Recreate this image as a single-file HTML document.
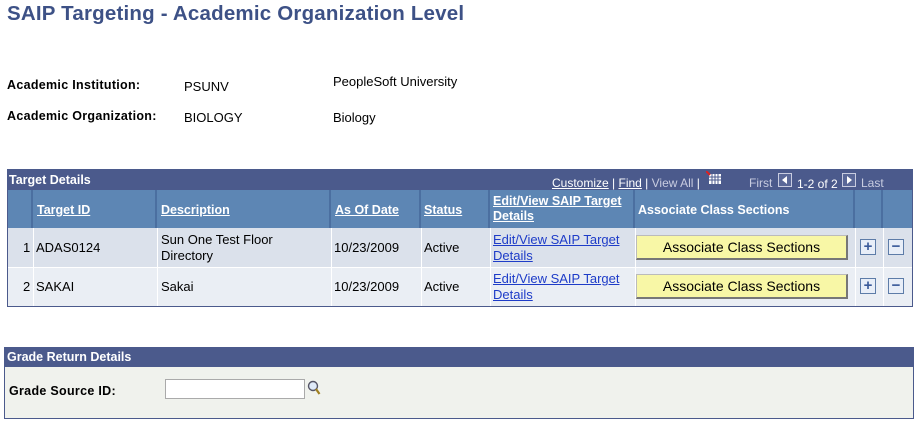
<!DOCTYPE html>
<html><head><meta charset="utf-8"><style>
*{margin:0;padding:0;box-sizing:border-box}
body{width:919px;height:426px;background:#fff;font-family:"Liberation Sans",Arial,sans-serif;font-size:13px;color:#000;position:relative;overflow:hidden}
.a{position:absolute;white-space:nowrap}
h1{position:absolute;left:7px;top:2px;font-size:20.5px;font-weight:bold;color:#3d5186;letter-spacing:0.2px}
.lbl{font-weight:bold;font-size:12.5px;letter-spacing:0.3px}
.hdr{background:#4b5a8c;color:#fff;font-weight:bold}
.ch{background:#5d86b4;border-right:2px solid #4b6fa0;position:absolute;top:190px;height:38px;color:#fff;font-weight:bold;font-size:12.5px}
.ch a{color:#fff;text-decoration:underline}
a{color:#1e3cc8;text-decoration:underline}
.btn{position:absolute;left:636px;width:212px;height:25px;background:#f8f7a6;border:1px solid #bbb;border-right:2px solid #777;border-bottom:2px solid #777;text-align:center;line-height:22px;font-size:14px}
.pm{position:absolute;width:16px;height:16px;border:1px solid #5d7ca8;background:#e8eef8;color:#3a5a9a;font-weight:bold;font-size:15px;line-height:13px;text-align:center}
</style></head><body>
<h1>SAIP Targeting - Academic Organization Level</h1>
<div class="a lbl" style="left:7px;top:78px">Academic Institution:</div>
<div class="a" style="left:184px;top:79px">PSUNV</div>
<div class="a" style="left:333px;top:74px">PeopleSoft University</div>
<div class="a lbl" style="left:7px;top:109px">Academic Organization:</div>
<div class="a" style="left:184px;top:110px">BIOLOGY</div>
<div class="a" style="left:333px;top:110px">Biology</div>

<div class="a" style="left:7px;top:169px;width:906px;height:138px;border:1px solid #4b5a8c;background:#fff"></div>
<div class="a hdr" style="left:7px;top:169px;width:906px;height:21px;padding:4px 2px;font-size:12.5px">Target Details</div>
<div class="a" style="left:552px;top:176px;color:#fff;font-size:12px"><span style="text-decoration:underline">Customize</span> | <span style="text-decoration:underline">Find</span> | <span style="color:#c8cce0">View All</span> |</div>
<svg class="a" style="left:706px;top:171px" width="16" height="14"><rect x="3" y="3" width="12" height="10" fill="#fff"/><path d="M3 6H15M3 9H15M6 3V13M9 3V13M12 3V13" stroke="#4b5a8c"/><path d="M0 0L4 4" stroke="#e02020" stroke-width="2"/></svg>
<div class="a" style="left:749px;top:176px;color:#c8cce0;font-size:12px">First</div>
<div class="a" style="left:778px;top:173px;width:14px;height:14px;border:1px solid #c8cce0;background:#5a6898"><svg width="12" height="12"><path d="M8 2L3 6L8 10Z" fill="#fff"/></svg></div>
<div class="a" style="left:797px;top:177px;color:#fff;font-size:12px">1-2 of 2</div>
<div class="a" style="left:842px;top:173px;width:14px;height:14px;border:1px solid #c8cce0;background:#5a6898"><svg width="12" height="12"><path d="M4 2L9 6L4 10Z" fill="#fff"/></svg></div>
<div class="a" style="left:861px;top:176px;color:#c8cce0;font-size:12px">Last</div>

<div class="ch" style="left:8px;width:25px"></div>
<div class="ch" style="left:33px;width:124px;padding:13px 4px"><a>Target ID</a></div>
<div class="ch" style="left:157px;width:174px;padding:13px 4px"><a>Description</a></div>
<div class="ch" style="left:331px;width:90px;padding:13px 4px"><a>As Of Date</a></div>
<div class="ch" style="left:421px;width:69px;padding:13px 3px"><a>Status</a></div>
<div class="ch" style="left:490px;width:145px;padding:4px 3px;line-height:15px;white-space:normal"><a>Edit/View SAIP Target Details</a></div>
<div class="ch" style="left:635px;width:220px;padding:13px 3px">Associate Class Sections</div>
<div class="ch" style="left:855px;width:28px"></div>
<div class="ch" style="left:883px;width:29px;border-right:none"></div>

<div class="a" style="left:8px;top:228px;width:904px;height:39px;background:#dbe1eb"></div>
<div class="a" style="left:8px;top:267px;width:904px;height:39px;background:#eaeef4"></div>
<div class="a" style="left:8px;top:267px;width:904px;height:1px;background:#fff"></div>
<div class="a" style="left:33px;top:228px;width:1px;height:78px;background:#fff"></div>
<div class="a" style="left:157px;top:228px;width:1px;height:78px;background:#fff"></div>
<div class="a" style="left:331px;top:228px;width:1px;height:78px;background:#fff"></div>
<div class="a" style="left:421px;top:228px;width:1px;height:78px;background:#fff"></div>
<div class="a" style="left:490px;top:228px;width:1px;height:78px;background:#fff"></div>
<div class="a" style="left:635px;top:228px;width:1px;height:78px;background:#fff"></div>
<div class="a" style="left:855px;top:228px;width:1px;height:78px;background:#fff"></div>
<div class="a" style="left:883px;top:228px;width:1px;height:78px;background:#fff"></div>

<div class="a" style="left:23px;top:240px">1</div>
<div class="a" style="left:36px;top:240px">ADAS0124</div>
<div class="a" style="left:161px;top:232px;line-height:16px">Sun One Test Floor<br>Directory</div>
<div class="a" style="left:334px;top:240px">10/23/2009</div>
<div class="a" style="left:424px;top:240px">Active</div>
<div class="a" style="left:493px;top:232px;line-height:16px"><a>Edit/View SAIP Target<br>Details</a></div>
<div class="btn" style="top:235px">Associate Class Sections</div>
<div class="pm" style="left:860px;top:239px">+</div>
<div class="pm" style="left:888px;top:239px">−</div>

<div class="a" style="left:23px;top:279px">2</div>
<div class="a" style="left:36px;top:279px">SAKAI</div>
<div class="a" style="left:161px;top:279px">Sakai</div>
<div class="a" style="left:334px;top:279px">10/23/2009</div>
<div class="a" style="left:424px;top:279px">Active</div>
<div class="a" style="left:493px;top:271px;line-height:16px"><a>Edit/View SAIP Target<br>Details</a></div>
<div class="btn" style="top:274px">Associate Class Sections</div>
<div class="pm" style="left:860px;top:278px">+</div>
<div class="pm" style="left:888px;top:278px">−</div>

<div class="a" style="left:4px;top:347px;width:910px;height:72px;border:1px solid #4b5a8c;background:#f0f2ed"></div>
<div class="a hdr" style="left:4px;top:347px;width:910px;height:20px;padding:3px 3px;font-size:12.5px">Grade Return Details</div>
<div class="a lbl" style="left:9px;top:384px">Grade Source ID:</div>
<div class="a" style="left:165px;top:379px;width:140px;height:20px;background:#fff;border:1px solid #aaa"></div>
<svg class="a" style="left:307px;top:380px" width="14" height="16"><circle cx="6" cy="6" r="4.5" fill="#dfeaf8" stroke="#556" stroke-width="1.4"/><path d="M9 9L12.5 14" stroke="#a08020" stroke-width="2.2"/></svg>
</body></html>
